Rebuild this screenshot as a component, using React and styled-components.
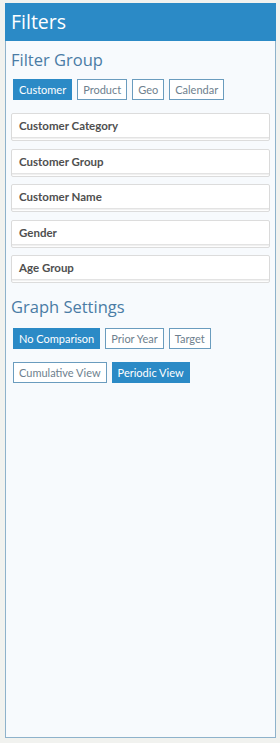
import React from 'react'
import styled, { createGlobalStyle } from 'styled-components'

const GlobalStyle = createGlobalStyle`
  body {
    margin: 0;
    background: #f1f2ef;
    font-family: "Open Sans", "Liberation Sans", sans-serif;
  }
`

const Page = styled.div`
  padding: 3px 4px 5px 5px;
`

const Panel = styled.div`
  width: 271px;
  height: 735px;
  box-sizing: border-box;
  background: #f7fafd;
  border: 1px solid #8eb2cb;
  border-top: none;
  display: flex;
  flex-direction: column;
`

const Header = styled.div`
  height: 38px;
  background: #2b8ac6;
  color: #fff;
  font-size: 19.5px;
  line-height: 38px;
  padding-left: 6px;
  margin: 0 -1px;
`

const Body = styled.div`
  padding: 8px 5px 0 5px;
`

const SectionTitle = styled.div`
  color: #4a7ca5;
  font-size: 16.5px;
  line-height: 22px;
  margin-top: ${p => p.$top || 0}px;
`

const BtnRow = styled.div`
  display: flex;
  gap: 5px;
  padding-left: 2px;
  margin-top: ${p => p.$top || 0}px;
`

const Btn = styled.div`
  height: 21px;
  box-sizing: border-box;
  padding: 0 5px;
  font-family: Lato, "Open Sans", sans-serif;
  font-size: 11px;
  line-height: 19px;
  border: 1px solid ${p => (p.$active ? '#2b8ac6' : '#6a9cbe')};
  background: ${p => (p.$active ? '#2b8ac6' : '#fff')};
  color: ${p => (p.$active ? '#fff' : '#6e7f8e')};
`

const List = styled.div`
  display: flex;
  flex-direction: column;
  gap: 7.5px;
  margin-top: 13px;
`

const Field = styled.div`
  height: 28px;
  box-sizing: border-box;
  background: #fff;
  border: 1px solid #dcdcdc;
  border-radius: 2px;
`

const FieldTitle = styled.div`
  height: 23px;
  line-height: 23px;
  padding-left: 7px;
  font-family: Lato, "Open Sans", sans-serif;
  font-size: 11.5px;
  font-weight: 700;
  color: #4f4f4f;
  border-bottom: 1px solid #e3e3e3;
  box-shadow: 0 1px 1px rgba(0,0,0,0.06);
`

const fields = ['Customer Category', 'Customer Group', 'Customer Name', 'Gender', 'Age Group']

export default function App() {
  return (
    <>
      <GlobalStyle />
      <Page>
        <Panel>
          <Header>Filters</Header>
          <Body>
            <SectionTitle>Filter Group</SectionTitle>
            <BtnRow $top={8}>
              <Btn $active>Customer</Btn>
              <Btn>Product</Btn>
              <Btn>Geo</Btn>
              <Btn>Calendar</Btn>
            </BtnRow>
            <List>
              {fields.map(f => (
                <Field key={f}>
                  <FieldTitle>{f}</FieldTitle>
                </Field>
              ))}
            </List>
            <SectionTitle $top={13}>Graph Settings</SectionTitle>
            <BtnRow $top={10}>
              <Btn $active>No Comparison</Btn>
              <Btn>Prior Year</Btn>
              <Btn>Target</Btn>
            </BtnRow>
            <BtnRow $top={13}>
              <Btn>Cumulative View</Btn>
              <Btn $active>Periodic View</Btn>
            </BtnRow>
          </Body>
        </Panel>
      </Page>
    </>
  )
}
